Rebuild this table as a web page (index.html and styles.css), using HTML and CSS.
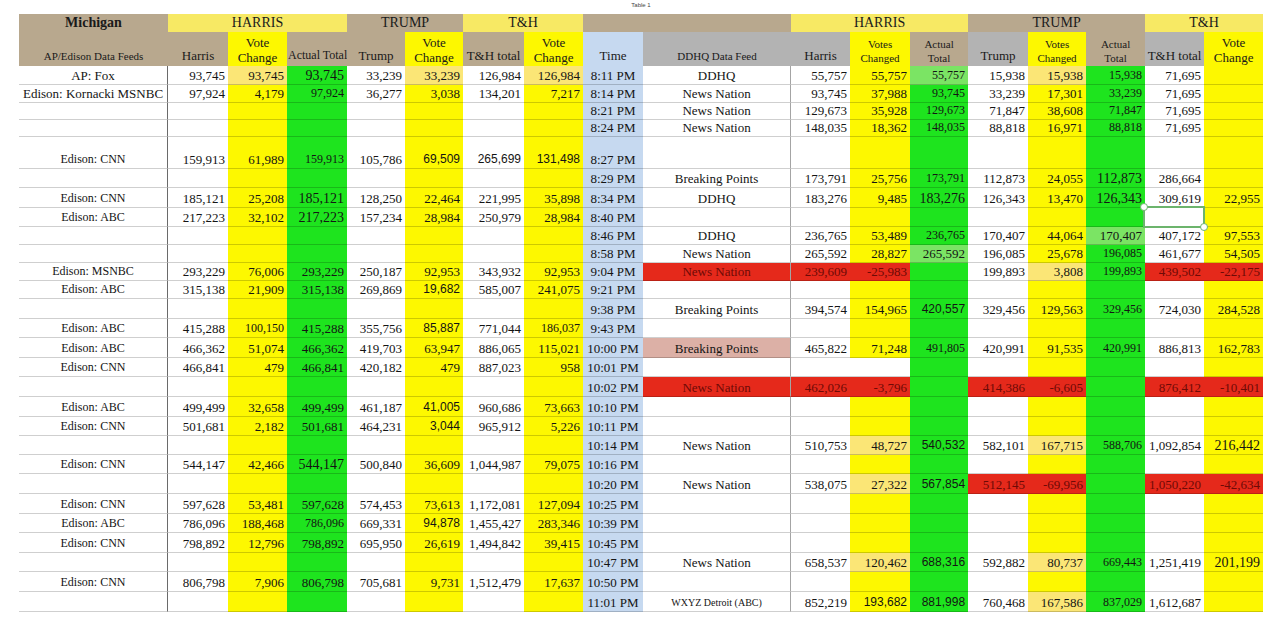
FILE: index.html
```html
<!DOCTYPE html>
<html lang="en">
<head>
<meta charset="utf-8">
<title>Table 1</title>
<link rel="stylesheet" href="styles.css">
</head>
<body>
<div class="sheet">
  <div class="caption">Table 1</div>
  <table class="grid">
    <colgroup>
      <col class="w149"><col class="w60"><col class="w59"><col class="w60"><col class="w58"><col class="w58"><col class="w61"><col class="w59"><col class="w60">
      <col class="w148"><col class="w59"><col class="w60"><col class="w58"><col class="w60"><col class="w58"><col class="w59"><col class="w59"><col class="w59">
    </colgroup>
    <thead>
      <tr class="hr1">
        <th class="tan bold">Michigan</th>
        <th class="hy" colspan="3">HARRIS</th>
        <th class="tan" colspan="2">TRUMP</th>
        <th class="hy" colspan="2">T&amp;H</th>
        <th class="tan" colspan="2"></th>
        <th class="hy" colspan="3">HARRIS</th>
        <th class="tan" colspan="3">TRUMP</th>
        <th class="hy" colspan="2">T&amp;H</th>
      </tr>
      <tr class="hr2">
        <th class="tan f11">AP/Edison Data Feeds</th>
        <th class="tan">Harris</th>
        <th class="yel two">Vote<br>Change</th>
        <th class="tan f12">Actual Total</th>
        <th class="tan">Trump</th>
        <th class="yel two">Vote<br>Change</th>
        <th class="tan">T&amp;H total</th>
        <th class="yel two">Vote<br>Change</th>
        <th class="blue">Time</th>
        <th class="gry f11">DDHQ Data Feed</th>
        <th class="gry">Harris</th>
        <th class="yel two f11">Votes<br>Changed</th>
        <th class="tan two f11">Actual<br>Total</th>
        <th class="gry">Trump</th>
        <th class="yel two f11">Votes<br>Changed</th>
        <th class="tan two f11">Actual<br>Total</th>
        <th class="gry">T&amp;H total</th>
        <th class="yel two">Vote<br>Change</th>
      </tr>
    </thead>
    <tbody>
      <tr class="h19">
        <td class="m13">AP: Fox</td><td>93,745</td><td class="yp">93,745</td><td class="big">93,745</td><td>33,239</td><td class="yp">33,239</td><td>126,984</td><td class="yp">126,984</td><td>8:11 PM</td>
        <td>DDHQ</td><td>55,757</td><td>55,757</td><td class="gl sm">55,757</td><td>15,938</td><td class="yp">15,938</td><td class="sm">15,938</td><td>71,695</td><td></td>
      </tr>
      <tr class="h18">
        <td class="m13">Edison: Kornacki MSNBC</td><td>97,924</td><td>4,179</td><td class="sm">97,924</td><td>36,277</td><td>3,038</td><td>134,201</td><td>7,217</td><td>8:14 PM</td>
        <td>News Nation</td><td>93,745</td><td>37,988</td><td class="sm">93,745</td><td>33,239</td><td>17,301</td><td class="sm">33,239</td><td>71,695</td><td></td>
      </tr>
      <tr class="h17">
        <td></td><td></td><td></td><td></td><td></td><td></td><td></td><td></td><td>8:21 PM</td>
        <td>News Nation</td><td>129,673</td><td>35,928</td><td class="sm">129,673</td><td>71,847</td><td>38,608</td><td class="sm">71,847</td><td>71,695</td><td></td>
      </tr>
      <tr class="h17">
        <td></td><td></td><td></td><td></td><td></td><td></td><td></td><td></td><td>8:24 PM</td>
        <td>News Nation</td><td>148,035</td><td>18,362</td><td class="sm">148,035</td><td>88,818</td><td>16,971</td><td class="sm">88,818</td><td>71,695</td><td></td>
      </tr>
      <tr class="h32">
        <td>Edison: CNN</td><td>159,913</td><td>61,989</td><td class="sm">159,913</td><td>105,786</td><td class="sans">69,509</td><td class="sans">265,699</td><td class="sans">131,498</td><td>8:27 PM</td>
        <td></td><td></td><td></td><td></td><td></td><td></td><td></td><td></td><td></td>
      </tr>
      <tr class="h19">
        <td></td><td></td><td></td><td></td><td></td><td></td><td></td><td></td><td>8:29 PM</td>
        <td>Breaking Points</td><td>173,791</td><td>25,756</td><td class="sm">173,791</td><td>112,873</td><td>24,055</td><td class="big">112,873</td><td>286,664</td><td></td>
      </tr>
      <tr class="h20">
        <td>Edison: CNN</td><td>185,121</td><td>25,208</td><td class="big">185,121</td><td>128,250</td><td>22,464</td><td>221,995</td><td>35,898</td><td>8:34 PM</td>
        <td>DDHQ</td><td>183,276</td><td>9,485</td><td class="big">183,276</td><td>126,343</td><td>13,470</td><td class="big">126,343</td><td>309,619</td><td>22,955</td>
      </tr>
      <tr class="h19">
        <td>Edison: ABC</td><td>217,223</td><td>32,102</td><td class="big">217,223</td><td>157,234</td><td>28,984</td><td>250,979</td><td>28,984</td><td>8:40 PM</td>
        <td></td><td></td><td></td><td></td><td></td><td></td><td></td><td class="selcell"><span class="sel"><span class="knob tl"></span><span class="knob br"></span></span></td><td></td>
      </tr>
      <tr class="h18">
        <td></td><td></td><td></td><td></td><td></td><td></td><td></td><td></td><td>8:46 PM</td>
        <td>DDHQ</td><td>236,765</td><td>53,489</td><td class="sm">236,765</td><td>170,407</td><td>44,064</td><td class="gl">170,407</td><td>407,172</td><td>97,553</td>
      </tr>
      <tr class="h18">
        <td></td><td></td><td></td><td></td><td></td><td></td><td></td><td></td><td>8:58 PM</td>
        <td>News Nation</td><td>265,592</td><td>28,827</td><td class="gl">265,592</td><td>196,085</td><td>25,678</td><td class="sm">196,085</td><td>461,677</td><td>54,505</td>
      </tr>
      <tr class="h18">
        <td>Edison: MSNBC</td><td>293,229</td><td>76,006</td><td>293,229</td><td>250,187</td><td>92,953</td><td>343,932</td><td>92,953</td><td>9:04 PM</td>
        <td class="red">News Nation</td><td class="red">239,609</td><td class="red">-25,983</td><td></td><td>199,893</td><td class="yp">3,808</td><td class="sm">199,893</td><td class="red">439,502</td><td class="red">-22,175</td>
      </tr>
      <tr class="h18">
        <td>Edison: ABC</td><td>315,138</td><td>21,909</td><td>315,138</td><td>269,869</td><td class="sans">19,682</td><td>585,007</td><td>241,075</td><td>9:21 PM</td>
        <td></td><td></td><td></td><td></td><td></td><td></td><td></td><td></td><td></td>
      </tr>
      <tr class="h20">
        <td></td><td></td><td></td><td></td><td></td><td></td><td></td><td></td><td>9:38 PM</td>
        <td>Breaking Points</td><td>394,574</td><td>154,965</td><td class="sans">420,557</td><td>329,456</td><td>129,563</td><td class="sm">329,456</td><td>724,030</td><td>284,528</td>
      </tr>
      <tr class="h19">
        <td>Edison: ABC</td><td>415,288</td><td class="sm">100,150</td><td>415,288</td><td>355,756</td><td class="sans">85,887</td><td>771,044</td><td class="sm">186,037</td><td>9:43 PM</td>
        <td></td><td></td><td></td><td></td><td></td><td></td><td></td><td></td><td></td>
      </tr>
      <tr class="h20">
        <td>Edison: ABC</td><td>466,362</td><td>51,074</td><td>466,362</td><td>419,703</td><td>63,947</td><td>886,065</td><td>115,021</td><td>10:00 PM</td>
        <td class="pink">Breaking Points</td><td>465,822</td><td>71,248</td><td class="sm">491,805</td><td>420,991</td><td>91,535</td><td class="sm">420,991</td><td>886,813</td><td>162,783</td>
      </tr>
      <tr class="h19">
        <td>Edison: CNN</td><td>466,841</td><td>479</td><td>466,841</td><td>420,182</td><td>479</td><td>887,023</td><td>958</td><td>10:01 PM</td>
        <td></td><td></td><td class="wht"></td><td></td><td></td><td></td><td></td><td></td><td></td>
      </tr>
      <tr class="h20">
        <td></td><td></td><td></td><td></td><td></td><td></td><td></td><td></td><td>10:02 PM</td>
        <td class="red">News Nation</td><td class="red">462,026</td><td class="red">-3,796</td><td></td><td class="red">414,386</td><td class="red">-6,605</td><td></td><td class="red">876,412</td><td class="red">-10,401</td>
      </tr>
      <tr class="h20">
        <td>Edison: ABC</td><td>499,499</td><td>32,658</td><td>499,499</td><td>461,187</td><td class="sans">41,005</td><td>960,686</td><td>73,663</td><td>10:10 PM</td>
        <td></td><td></td><td></td><td></td><td></td><td></td><td></td><td></td><td></td>
      </tr>
      <tr class="h19">
        <td>Edison: CNN</td><td>501,681</td><td>2,182</td><td>501,681</td><td>464,231</td><td class="sans">3,044</td><td>965,912</td><td>5,226</td><td>10:11 PM</td>
        <td></td><td></td><td></td><td></td><td></td><td></td><td></td><td></td><td></td>
      </tr>
      <tr class="h19">
        <td></td><td></td><td></td><td></td><td></td><td></td><td></td><td></td><td>10:14 PM</td>
        <td>News Nation</td><td>510,753</td><td class="yp">48,727</td><td class="sans">540,532</td><td>582,101</td><td class="yp">167,715</td><td class="sm">588,706</td><td>1,092,854</td><td class="big">216,442</td>
      </tr>
      <tr class="h19">
        <td>Edison: CNN</td><td>544,147</td><td>42,466</td><td class="big">544,147</td><td>500,840</td><td>36,609</td><td>1,044,987</td><td>79,075</td><td>10:16 PM</td>
        <td></td><td></td><td></td><td></td><td></td><td></td><td></td><td></td><td></td>
      </tr>
      <tr class="h20">
        <td></td><td></td><td></td><td></td><td></td><td></td><td></td><td></td><td>10:20 PM</td>
        <td>News Nation</td><td>538,075</td><td class="yp">27,322</td><td class="sans">567,854</td><td class="red">512,145</td><td class="red">-69,956</td><td></td><td class="red">1,050,220</td><td class="red">-42,634</td>
      </tr>
      <tr class="h20">
        <td>Edison: CNN</td><td>597,628</td><td>53,481</td><td>597,628</td><td>574,453</td><td>73,613</td><td>1,172,081</td><td>127,094</td><td>10:25 PM</td>
        <td></td><td></td><td></td><td></td><td></td><td></td><td></td><td></td><td></td>
      </tr>
      <tr class="h19">
        <td>Edison: ABC</td><td>786,096</td><td>188,468</td><td class="sm">786,096</td><td>669,331</td><td class="sans">94,878</td><td>1,455,427</td><td>283,346</td><td>10:39 PM</td>
        <td></td><td></td><td></td><td></td><td></td><td></td><td></td><td></td><td></td>
      </tr>
      <tr class="h20">
        <td>Edison: CNN</td><td>798,892</td><td>12,796</td><td>798,892</td><td>695,950</td><td>26,619</td><td>1,494,842</td><td>39,415</td><td>10:45 PM</td>
        <td></td><td></td><td></td><td></td><td></td><td></td><td></td><td></td><td></td>
      </tr>
      <tr class="h19">
        <td></td><td></td><td></td><td></td><td></td><td></td><td></td><td></td><td>10:47 PM</td>
        <td>News Nation</td><td>658,537</td><td class="yp">120,462</td><td class="sans">688,316</td><td>592,882</td><td class="yp">80,737</td><td class="sm">669,443</td><td>1,251,419</td><td class="big">201,199</td>
      </tr>
      <tr class="h20">
        <td>Edison: CNN</td><td>806,798</td><td>7,906</td><td>806,798</td><td>705,681</td><td>9,731</td><td>1,512,479</td><td>17,637</td><td>10:50 PM</td>
        <td></td><td></td><td></td><td></td><td></td><td></td><td></td><td></td><td></td>
      </tr>
      <tr class="h20">
        <td></td><td></td><td></td><td></td><td></td><td></td><td></td><td></td><td>11:01 PM</td>
        <td class="tiny">WXYZ Detroit (ABC)</td><td>852,219</td><td class="sans">193,682</td><td class="sans">881,998</td><td>760,468</td><td class="yp">167,586</td><td class="sm">837,029</td><td>1,612,687</td><td></td>
      </tr>
    </tbody>
  </table>
</div>
</body>
</html>
```

FILE: styles.css
```css
* { box-sizing: border-box; }

body {
  margin: 0;
  background: #ffffff;
  font-family: "Liberation Serif", "Times New Roman", serif;
  color: #141414;
}

.sheet {
  padding-left: 19px;
  width: 1284px;
}

.caption {
  width: 1244px;
  height: 14px;
  text-align: center;
  font-family: "Liberation Sans", Arial, sans-serif;
  font-size: 6px;
  line-height: 11px;
  color: #444;
}

.grid {
  border-collapse: separate;
  border-spacing: 0;
  table-layout: fixed;
  width: 1244px;
}

.w149 { width: 149px; }
.w148 { width: 148px; }
.w61 { width: 61px; }
.w60 { width: 60px; }
.w59 { width: 59px; }
.w58 { width: 58px; }

.grid th,
.grid td {
  padding: 0 3px;
  white-space: nowrap;
  overflow: hidden;
}

/* header */
.grid th {
  font-weight: normal;
  text-align: center;
  vertical-align: bottom;
  color: #1a1a1a;
}

.hr1 { height: 18px; }
.hr1 th {
  font-size: 14px;
  line-height: 16px;
  padding-bottom: 1px;
}
.hr1 th.bold { font-weight: bold; }

.hr2 { height: 34px; }
.hr2 th {
  font-size: 13px;
  line-height: 15px;
  padding: 0 1px 3px;
}
.hr2 th.two { line-height: 15px; padding-bottom: 1px; }
.hr2 th.f11 { font-size: 11px; line-height: 14px; }
.hr2 th.f12 { font-size: 12px; }

.tan { background: #b8a88e; }
.gry { background: #b3b3b3; }
.hy { background: #f7e964; }
.yel { background: #fdf800; }
.blue { background: #c6d9f0; }

/* body rows */
.h17 { height: 17px; }
.h18 { height: 18px; }
.h19 { height: 19px; }
.h20 { height: 20px; }
.h32 { height: 32px; }

.grid tbody td {
  font-size: 13px;
  line-height: 15px;
  vertical-align: bottom;
  padding-bottom: 1px;
  text-align: right;
  background: #ffffff;
  border-bottom: 1px solid rgba(0, 0, 0, 0.19);
}

.grid tbody td:nth-child(1) {
  text-align: center;
  font-size: 12px;
  border-right: 1px solid #6a6a6a;
}
.grid tbody td:nth-child(9) {
  text-align: center;
  background: #c6d9f0;
  padding: 0 0 1px;
}
.grid tbody td:nth-child(10) {
  text-align: center;
  border-right: 1px solid #a4a4a4;
}

.grid tbody td:nth-child(3),
.grid tbody td:nth-child(6),
.grid tbody td:nth-child(8),
.grid tbody td:nth-child(12),
.grid tbody td:nth-child(15),
.grid tbody td:nth-child(18) {
  background: #fdf800;
}

.grid tbody td:nth-child(4),
.grid tbody td:nth-child(13),
.grid tbody td:nth-child(16) {
  background: #1ee41e;
}

/* cell overrides */
.grid tbody td.m13 { font-size: 13px; }
.grid tbody td.yp { background: #fbe676; }
.grid tbody td.gl { background: #7be464; }
.grid tbody td.wht { background: #ffffff; }
.grid tbody td.red { background: #e5291b; color: #6e0a06; }
.grid tbody td.pink { background: #dcb0a6; }
.grid tbody td.big { font-size: 14px; }
.grid tbody td.sm { font-size: 12px; }
.grid tbody td.sans {
  font-family: "Liberation Sans", Arial, sans-serif;
  font-size: 12px;
}
.grid tbody td.tiny { font-size: 10px; }

/* spreadsheet selection overlay */
.grid tbody td.selcell {
  position: relative;
  overflow: visible;
}
.sel {
  position: absolute;
  left: -2px;
  top: -2px;
  right: -1px;
  bottom: -2px;
  border: 2px solid #6cb46c;
}
.knob {
  position: absolute;
  width: 8px;
  height: 8px;
  border-radius: 50%;
  background: #ffffff;
  border: 1.5px solid #6cb46c;
}
.knob.tl { left: -5px; top: -5px; }
.knob.br { right: -5px; bottom: -5px; }
```
